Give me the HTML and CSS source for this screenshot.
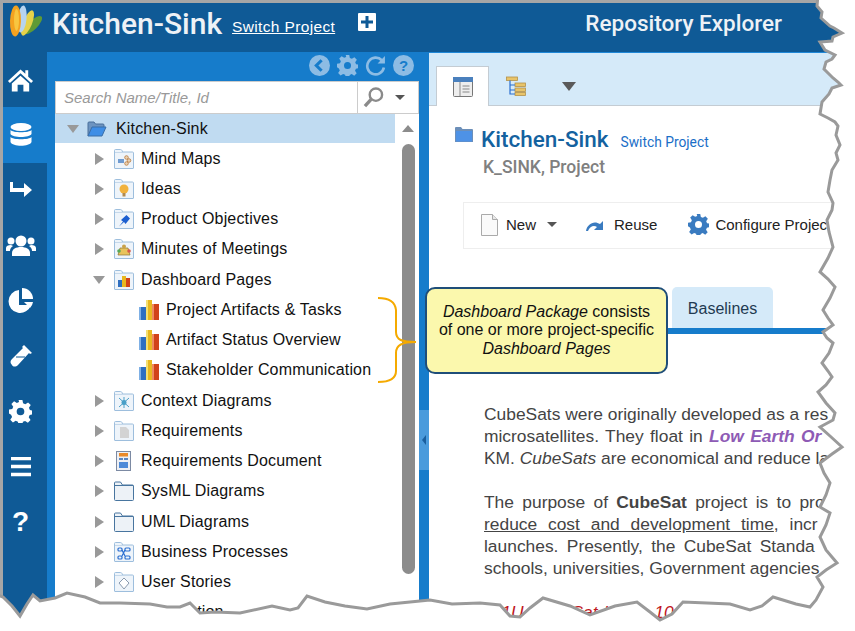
FILE: index.html
```html
<!DOCTYPE html>
<html lang="en">
<head>
<meta charset="utf-8">
<title>Repository Explorer</title>
<link rel="stylesheet" href="styles.css">
</head>
<body>
<svg class="defs" width="0" height="0" aria-hidden="true">
  <symbol id="folder" viewBox="0 0 20 20">
    <path d="M.5 19V1.500q0-1 1-1h5q1 0 1.500 1l.5 1.500h10q1 0 1 1V19q0 .5-.5.5h-18q-.5 0-.5-.5z" fill="#eef4fa" stroke="#9dbedd"/>
    <path d="M1 3.500h18" stroke="#c5d8ea"/>
  </symbol>
  <symbol id="barchart" viewBox="0 0 20 20">
    <rect x="0" y="7" width="7" height="13" fill="#2f6fc0"/><rect x="0" y="7" width="2" height="13" fill="#7fb0e5"/>
    <rect x="7" y="0" width="6" height="20" fill="#e8b820"/><rect x="7" y="0" width="2" height="20" fill="#f6e070"/>
    <rect x="13" y="4" width="7" height="16" fill="#d1431a"/><rect x="13" y="4" width="2" height="16" fill="#ee8a60"/>
  </symbol>
  <symbol id="gearshape" viewBox="0 0 24 24">
    <path fill-rule="evenodd" d="M10 0h4l.7 3.400 2.300 1 2.900-1.900 2.800 2.800-1.900 2.900 1 2.300 3.200.5v4l-3.400.7-1 2.300 1.900 2.900-2.800 2.800-2.900-1.900-2.300 1-.5 3.200h-4l-.7-3.400-2.300-1-2.900 1.900-2.800-2.800 1.900-2.900-1-2.300L0 14v-4l3.400-.7 1-2.300-1.900-2.900 2.800-2.800 2.900 1.900 2.300-1zM12 8a4 4 0 1 0 0 8 4 4 0 0 0 0-8z"/>
  </symbol>
</svg>
<div class="page">
  <header class="topbar">
    <svg class="logo" viewBox="0 0 36 32" width="36" height="32">
      <ellipse cx="26" cy="20" rx="4.500" ry="12" transform="rotate(45 26 20)" fill="#5f9a35"/>
      <ellipse cx="20.500" cy="18" rx="4.500" ry="13.500" transform="rotate(22 20.500 18)" fill="#e6d24a"/>
      <ellipse cx="15" cy="14" rx="4.500" ry="13.500" transform="rotate(6 15 14)" fill="#b7d4ef"/>
      <ellipse cx="8.500" cy="16" rx="5.500" ry="15.500" transform="rotate(2 8.500 16)" fill="#f4a21f"/>
      <ellipse cx="9.500" cy="15" rx="2.500" ry="11" fill="#f8c640"/>
    </svg>
    <span class="brand">Kitchen-Sink</span>
    <a class="switch-top">Switch Project</a>
    <span class="plus"><svg viewBox="0 0 18 18" width="18" height="18"><rect width="18" height="18" rx="1" fill="#fff"/><path d="M9 3v12M3 9h12" stroke="#0f5a96" stroke-width="3"/></svg></span>
    <span class="page-title">Repository Explorer</span>
  </header>
  <div class="main">
    <nav class="rail">
      <div class="rail-item"><svg viewBox="0 0 28 24" width="27" height="24"><path d="M14 1 1 13l2 2L14 5l11 10 2-2-5-4.500V2h-3v3.500z" fill="#fff"/><path d="M5 15.500 14 7.500l9 8V24h-6v-7h-6v7H5z" fill="#fff"/></svg></div>
      <div class="rail-item active"><svg viewBox="0 0 22 24" width="22" height="24"><ellipse cx="11" cy="4" rx="10.500" ry="4" fill="#fff"/><path d="M.5 7c2 3 19 3 21 0v4c-2 4-19 4-21 0zM.5 14c2 3 19 3 21 0v5c-2 5-19 5-21 0z" fill="#fff"/></svg></div>
      <div class="rail-item"><svg viewBox="0 0 24 18" width="24" height="18"><path d="M1 1h3v6h11V2l8 7-8 7v-5H1z" fill="#fff"/></svg></div>
      <div class="rail-item"><svg viewBox="0 0 30 22" width="30" height="22"><circle cx="15" cy="6" r="5.500" fill="#fff"/><path d="M6 21v-3c0-4 4-6 9-6s9 2 9 6v3z" fill="#fff"/><circle cx="5" cy="6" r="3.500" fill="#fff"/><circle cx="25" cy="6" r="3.500" fill="#fff"/><path d="M0 16v-3c0-2 2-3 5-3l2 1c-2 1-3 3-3 5zM30 16v-3c0-2-2-3-5-3l-2 1c2 1 3 3 3 5z" fill="#fff"/></svg></div>
      <div class="rail-item"><svg viewBox="0 0 26 26" width="26" height="26"><path d="M11 2a11.500 11.500 0 1 0 12 15H11z" fill="#fff"/><path d="M14 0a11 11 0 0 1 11 11H14z" fill="#fff"/><path d="M16 14h9a11 11 0 0 1-3 6z" fill="#fff"/></svg></div>
      <div class="rail-item"><svg viewBox="0 0 24 24" width="24" height="24"><path d="M15 1l8 8-2 1-1-1L9 21c-2 2-5 2-6 0-2-2-2-4 0-6L14 4l-1-1z" fill="#fff"/><path d="M7 13h9" stroke="#0f5a96"/></svg></div>
      <div class="rail-item"><svg viewBox="0 0 24 24" width="23" height="23" class="gear-white"><use href="#gearshape"/></svg></div>
      <div class="rail-item"><svg viewBox="0 0 22 20" width="22" height="20"><path d="M1 1.500h20M1 9.500h20M1 17.500h20" stroke="#fff" stroke-width="3.500"/></svg></div>
      <div class="rail-item"><span class="q">?</span></div>
    </nav>
    <aside class="panel">
      <div class="panel-tools">
        <svg viewBox="0 0 20 20" width="21" height="21"><circle cx="10" cy="10" r="10" fill="#8dbce4"/><path d="M12 5l-5 5 5 5" fill="none" stroke="#167ccb" stroke-width="3"/></svg>
        <svg viewBox="0 0 24 24" width="21" height="21" class="gear-muted"><use href="#gearshape"/></svg>
        <svg viewBox="0 0 20 20" width="21" height="21"><path d="M16 5a8 8 0 1 0 2 7" fill="none" stroke="#8dbce4" stroke-width="2.500"/><path d="M19 1v7h-7z" fill="#8dbce4"/></svg>
        <span class="help-dot">?</span>
      </div>
      <div class="panel-box">
        <div class="search">
          <span class="search-text">Search Name/Title, Id</span>
          <span class="search-btn">
            <svg viewBox="0 0 22 22" width="21" height="21"><circle cx="13.500" cy="8" r="6.500" fill="none" stroke="#8a8a8a" stroke-width="2.500"/><path d="M8.500 13 2 20" stroke="#8a8a8a" stroke-width="3.500"/></svg>
            <i class="caret"></i>
          </span>
        </div>
        <div class="tree-wrap">
          <ul class="tree">
            <li class="row root"><i class="tw down"></i><svg class="ic" viewBox="0 0 20 16" width="20" height="16"><path d="M1 15V2q0-1 1-1h5l1.500 2H16q1 0 1 1v3" fill="#6d94c0" stroke="#4a6f9a"/><path d="M1 15 5 6h14l-4 9z" fill="#3f8ee6" stroke="#3a6ea8"/></svg><span>Kitchen-Sink</span></li>
            <li class="row"><i class="tw"></i><svg class="ic"><use href="#folder"/><rect x="4" y="10" width="6" height="4" fill="#6f9bd1"/><g fill="#e9d2b4" stroke="#b9793a" stroke-width=".8"><circle cx="12.500" cy="8.500" r="1.800"/><circle cx="15" cy="11.500" r="1.800"/><circle cx="12.500" cy="14.500" r="1.800"/></g></svg><span>Mind Maps</span></li>
            <li class="row"><i class="tw"></i><svg class="ic"><use href="#folder"/><circle cx="10" cy="10" r="4.500" fill="#f1b23e"/><rect x="8.500" y="14" width="3" height="3.500" fill="#b08a50"/></svg><span>Ideas</span></li>
            <li class="row"><i class="tw"></i><svg class="ic"><use href="#folder"/><path d="M5 17.500l4-5-2-1.500 5.500-5 3.500 3.500-4.500 5.500-1.500-2z" fill="#1d5fd0"/></svg><span>Product Objectives</span></li>
            <li class="row"><i class="tw"></i><svg class="ic"><use href="#folder"/><path d="M4 16l2-7h8l2 7z" fill="#e8c35c" stroke="#8c7434" stroke-width=".7"/><circle cx="10" cy="7.500" r="2" fill="#c9a24a"/><circle cx="5" cy="12" r="1.800" fill="#58a858"/><circle cx="15" cy="12" r="1.800" fill="#d85a4a"/></svg><span>Minutes of Meetings</span></li>
            <li class="row"><i class="tw down"></i><svg class="ic"><use href="#folder"/><rect x="4" y="10" width="4" height="7" fill="#2f6fc0"/><rect x="8" y="6" width="4" height="11" fill="#e8b820"/><rect x="12" y="8" width="4" height="9" fill="#d1431a"/></svg><span>Dashboard Pages</span></li>
            <li class="row sub"><svg class="ic"><use href="#barchart"/></svg><span>Project Artifacts &amp; Tasks</span></li>
            <li class="row sub"><svg class="ic"><use href="#barchart"/></svg><span>Artifact Status Overview</span></li>
            <li class="row sub"><svg class="ic"><use href="#barchart"/></svg><span>Stakeholder Communication</span></li>
            <li class="row"><i class="tw"></i><svg class="ic"><use href="#folder"/><path d="M5 7l10 9M15 7 5 16M10 6v11" stroke="#4aa0c8"/><circle cx="10" cy="11.500" r="2.500" fill="#4aa0c8"/></svg><span>Context Diagrams</span></li>
            <li class="row"><i class="tw"></i><svg class="ic"><use href="#folder"/><path d="M6 6h6l3 3v8H6z" fill="#d3d3d3"/></svg><span>Requirements</span></li>
            <li class="row"><i class="tw"></i><svg class="ic" viewBox="0 0 20 20"><rect x="2.500" y=".5" width="14" height="19" fill="#eef0f4" stroke="#7c8aa3"/><rect x="5" y="2" width="9" height="3.500" fill="#ea8a2a"/><rect x="5" y="7" width="4" height="2" fill="#5a86c2"/><rect x="10" y="7" width="4" height="2" fill="#5a86c2"/><rect x="5" y="11" width="9" height="6" fill="#4d8ad8"/></svg><span>Requirements Document</span></li>
            <li class="row"><i class="tw"></i><svg class="ic" viewBox="0 0 20 20"><path d="M.5 18.500V2q0-1 1-1h5l2 3h10q1 0 1 1v13.500q0 1-1 1h-17q-1 0-1-1z" fill="#edf2f7" stroke="#48759f"/><path d="M1 4.500h18" stroke="#48759f"/></svg><span>SysML Diagrams</span></li>
            <li class="row"><i class="tw"></i><svg class="ic" viewBox="0 0 20 20"><path d="M.5 18.500V2q0-1 1-1h5l2 3h10q1 0 1 1v13.500q0 1-1 1h-17q-1 0-1-1z" fill="#edf2f7" stroke="#48759f"/><path d="M1 4.500h18" stroke="#48759f"/></svg><span>UML Diagrams</span></li>
            <li class="row"><i class="tw"></i><svg class="ic"><use href="#folder"/><g fill="none" stroke="#2a6ed0" stroke-width="1.200"><rect x="4" y="6" width="4" height="3" rx="1"/><rect x="11" y="6" width="5" height="3" rx="1"/><rect x="4" y="14" width="4" height="3" rx="1"/><rect x="11" y="14" width="5" height="3" rx="1"/><path d="M8 8l3 6M11 8l-3 6"/></g></svg><span>Business Processes</span></li>
            <li class="row"><i class="tw"></i><svg class="ic"><use href="#folder"/><path d="M10 6l5 5-5 6-5-6z" fill="#fff" stroke="#8a9bb0"/></svg><span>User Stories</span></li>
            <li class="row"><i class="tw"></i><svg class="ic"><use href="#folder"/></svg><span>Automation</span></li>
          </ul>
          <div class="scrollbar"><i class="scroll-up"></i><div class="thumb"></div></div>
        </div>
      </div>
    </aside>
    <div class="splitter"><div class="split-handle"><i></i></div></div>
    <section class="content">
      <div class="view-tabs">
        <span class="vtab on"><svg viewBox="0 0 20 20" width="20" height="20"><rect x=".5" y=".5" width="19" height="19" rx="1" fill="#eee" stroke="#777"/><rect x="0" y="0" width="20" height="5" fill="#4a80bd"/><path d="M7 5v14M9.500 9h7M9.500 12h7M9.500 15h7" stroke="#888"/></svg></span>
        <span class="vtab"><svg viewBox="0 0 20 20" width="20" height="20"><g fill="#e8c46a" stroke="#b3924a" stroke-width=".8"><rect x=".5" y="1" width="11" height="3.500"/><rect x="9" y="7" width="10.500" height="3.500"/><rect x="9" y="12" width="10.500" height="3.500"/><rect x="9" y="16.500" width="10.500" height="3"/></g><path d="M4 4.500V18h5M4 9h5M4 14h5" fill="none" stroke="#2a6ed0" stroke-width="1.200"/></svg></span>
        <span class="vtab"><i class="tri"></i></span>
      </div>
      <div class="title-row">
        <svg viewBox="0 0 18 16" width="18" height="16"><path d="M0 15V1q0-1 1-1h5l1.500 2H17q1 0 1 1v12z" fill="#6c8fb9"/><rect x="1" y="4" width="16" height="10.500" fill="#4e92e6"/></svg>
        <h1>Kitchen-Sink</h1>
        <a>Switch Project</a>
      </div>
      <div class="sub-title">K_SINK, Project</div>
      <div class="actions">
        <span class="act"><svg viewBox="0 0 17 22" width="17" height="22"><path d="M.5.5h11l5 5v16H.5z" fill="#fafafa" stroke="#aaa"/><path d="M11.500.5v5h5" fill="#e8e8e8" stroke="#aaa"/></svg>New<i class="caret"></i></span>
        <span class="act"><svg viewBox="0 0 21 14" width="21" height="14"><path d="M1 13C2 6 9 2 15 6l3-3v9h-9l3-3C9 7 5 8 3 13z" fill="#3a7bc0"/></svg>Reuse</span>
        <span class="act"><svg viewBox="0 0 24 24" width="21" height="21" class="gear-blue"><use href="#gearshape"/></svg>Configure Project</span>
      </div>
      <div class="tabstrip"><span class="tab">Baselines</span></div>
      <div class="doc">
        <p><span class="ln">CubeSats were originally developed as a res</span><span class="ln ws-b">microsatellites. They float in <b class="leo">Low Earth Or</b></span><span class="ln">KM. <em>CubeSats</em> are economical and reduce la</span></p>
        <p><span class="ln ws-c">The purpose of <b>CubeSat</b> project is to pro</span><span class="ln ws-d"><u>reduce cost and development time</u>, incr</span><span class="ln ws-c">launches. Presently, the CubeSat Standa</span><span class="ln">schools, universities, Government agencies</span></p>
        <p class="red"><span class="ln ws-b"><em>A 1U CubeSat has a 10 cm</em></span></p>
      </div>
    </section>
  </div>

  <svg class="brace" viewBox="0 0 60 90" width="60" height="90"><path d="M1 2c8 0 17 2 18 12v22c0 8 6 10 20 10-14 0-20 3-20 11v18c0 9-10 11-18 11" fill="none" stroke="#f5aa00" stroke-width="2"/></svg>
  <div class="callout"><em>Dashboard Package</em> consists of one or more project-specific <em>Dashboard Pages</em></div>

  <svg class="tear" viewBox="0 0 855 631" width="855" height="631">
    <path d="M818 -5 817 6 822 12 821 18 830 26 834 28 842 33 833 37 832 41 820 42 825 50 835 55 832 59 826 62 824 69 833 78 838 82 841 85 832 88 829 94 822 102 820 114 828 118 835 122 838 126 836 135 840 145 836 153 838 160 832 170 830 180 828 192 833 203 832 210 827 220 829 232 833 247 828 258 820 272 828 279 835 287 830 298 823 310 828 318 833 325 823 332 827 338 833 343 829 353 822 363 828 371 832 377 826 385 818 392 826 403 835 413 833 420 820 427 830 436 842 447 832 454 820 463 824 473 830 483 826 495 820 507 830 513 826 525 820 537 826 550 837 563 826 570 817 577 823 587 816 600 810 607 796 604 773 597 762 606 750 610 730 604 707 603 683 602 672 614 660 620 650 612 637 602 615 606 590 615 570 606 543 598 530 608 520 617 510 616 500 605 480 603 452 604 430 600 410 602 390 604 367 609 345 606 325 602 307 596 298 608 290 610 272 606 240 613 215 612 200 613 190 603 180 607 167 607 150 604 120 603 100 603 85 597 67 593 55 598 40 601 33 595 27 604 20 616 12 606 3 597 -5 594 -5 640 860 640 860 -5z" fill="#fff" stroke="#9a9a9a" stroke-width="3" stroke-linejoin="miter"/>
  </svg>
</div>
</body>
</html>
```
FILE: styles.css
```css
* { box-sizing: border-box; }
html, body { margin: 0; padding: 0; }
body { width: 855px; height: 631px; overflow: hidden; background: #fff; font-family: "Liberation Sans", Arial, sans-serif; }
.defs { position: absolute; }
.page { position: relative; width: 855px; height: 631px; overflow: hidden; background: #a6a6a6; padding: 3px 0 0 3px; display: flex; flex-direction: column; }

.topbar { height: 49px; flex: none; background: #0f5a96; display: flex; align-items: center; color: #eef2f6; font-family: Roboto, sans-serif; }
.logo { margin: -14px 0 0 4px; flex: none; }
.brand { font-size: 30px; font-weight: 500; margin: -9px 0 0 9px; }
.switch-top { font-family: "Liberation Sans", sans-serif; font-size: 15.500px; letter-spacing: .35px; color: #fff; text-decoration: underline; margin: -2px 0 0 10px; }
.plus { display: flex; margin: -11px 0 0 23px; }
.page-title { margin: -10px 0 0 auto; padding-right: 73px; font-size: 22.500px; font-weight: 500; }

.main { flex: 1; display: flex; min-height: 0; }
.rail { width: 44px; flex: none; background: #0f5a96; display: flex; flex-direction: column; }
.rail-item { height: 55.300px; flex: none; display: flex; align-items: center; justify-content: center; padding-right: 9px; color: #fff; }
.rail-item.active { background: #167ccb; }
.q { font: 700 28px "Liberation Sans", sans-serif; color: #fff; }
.gear-white { fill: #fff; }

.panel { width: 372px; flex: none; background: #167ccb; display: flex; flex-direction: column; padding-left: 8px; }
.panel-tools { height: 29px; flex: none; display: flex; align-items: center; justify-content: flex-end; gap: 7px; padding: 0 5px 2px 0; }
.gear-muted { fill: #8dbce4; }
.help-dot { width: 21px; height: 21px; border-radius: 50%; background: #8dbce4; color: #167ccb; font: 700 15px/21px "Liberation Sans", sans-serif; text-align: center; }
.panel-box { flex: 1; background: #fff; display: flex; flex-direction: column; min-height: 0; }
.search { height: 33px; flex: none; border: 1px solid #ccc; display: flex; background: #fff; }
.search-text { flex: 1; font-style: italic; color: #999; font-size: 15px; line-height: 31px; padding-left: 8px; }
.search-btn { width: 61px; flex: none; border-left: 1px solid #ccc; display: flex; align-items: center; gap: 11px; padding-left: 5px; }
.caret { display: inline-block; width: 0; height: 0; border: 5px solid transparent; border-top: 5px solid #555; border-bottom: 0; }

.tree-wrap { flex: 1; display: flex; min-height: 0; overflow: hidden; }
.tree { list-style: none; margin: 0; padding: 0; flex: 1; }
.row { height: 30.250px; display: flex; align-items: center; font-size: 16px; letter-spacing: .17px; color: #111; padding-left: 37.500px; white-space: nowrap; }
.row span { margin-left: 7.500px; }
.row.root { height: 29px; background: #c0dbf1; padding-left: 12px; margin-bottom: .5px; }
.row.root span { margin-left: 9px; }
.row.sub { padding-left: 84px; }
.row.sub span { margin-left: 7px; }
.tw { width: 0; height: 0; flex: none; border-style: solid; border-width: 6px 0 6px 9px; border-color: transparent transparent transparent #999; margin-right: 10px; margin-left: 2px; }
.tw.down { border-width: 8px 6.500px 0; border-color: #999 transparent transparent; margin: 0 9px 0 0; }
.ic { width: 20px; height: 20px; flex: none; }
.root .ic { width: 20px; height: 16px; }
.row.root .tw { margin-right: 8px; }
.scrollbar { width: 24px; flex: none; display: flex; flex-direction: column; align-items: flex-start; padding: 11px 0 0 7px; }
.scroll-up { width: 0; height: 0; flex: none; border-style: solid; border-width: 0 6.500px 7px; border-color: transparent transparent #8c8c8c; margin-bottom: 12px; }
.thumb { width: 13px; height: 430px; flex: none; background: #8c8c8c; border-radius: 7px; }

.splitter { width: 10px; flex: none; background: #167ccb; padding-top: 358px; }
.split-handle { height: 60px; background: #4a9bdc; display: flex; align-items: center; justify-content: center; }
.split-handle i { width: 0; height: 0; border-style: solid; border-width: 5px 4px 5px 0; border-color: transparent #1a5f9e transparent transparent; }

.content { flex: 1; background: #fff; min-width: 0; overflow: hidden; display: flex; flex-direction: column; }
.view-tabs { height: 54px; flex: none; background: #d5eaf9; border-bottom: 1px solid #c4ccd3; border-top: 1px solid #1f88d8; display: flex; align-items: flex-end; padding-left: 7px; }
.vtab { width: 53px; height: 40px; margin-bottom: -1px; display: flex; align-items: center; justify-content: center; }
.vtab.on { background: #fff; border: 1px solid #c4ccd3; border-bottom: 0; }
.tri { width: 0; height: 0; border-style: solid; border-width: 9px 7.500px 0; border-color: #5a5a5a transparent transparent; }
.title-row { display: flex; align-items: center; height: 30px; margin: 18px 0 0 26px; flex: none; }
.title-row svg { margin-top: -8px; }
.title-row h1 { margin: 0 0 0 8px; font: 500 22.500px Roboto, sans-serif; color: #14629f; }
.title-row a { margin: 6px 0 0 12px; font: 400 13.800px Roboto, sans-serif; color: #1a6ec7; }
.sub-title { margin: 2px 0 0 54px; height: 22px; flex: none; font: 500 17.500px/22px Roboto, sans-serif; color: #80807f; }
.actions { margin: 24px 0 0 34px; width: 500px; height: 47px; flex: none; border: 1px solid #eee; display: flex; align-items: center; padding-bottom: 2px; font-size: 15px; color: #222; }
.act { display: inline-flex; align-items: center; gap: 8px; white-space: nowrap; }
.act:nth-child(1) { margin-left: 17px; }
.act:nth-child(1) .caret { margin-left: 3px; }
.act:nth-child(2) { margin-left: 28px; }
.act:nth-child(3) { margin-left: 31px; gap: 6px; }
.gear-blue { fill: #3a7bc0; }
.tabstrip { margin-top: 38px; height: 47px; flex: none; border-bottom: 6px solid #167ccb; padding-left: 243px; display: flex; }
.tab { width: 101px; height: 41px; background: #d5eaf9; border-radius: 5px 5px 0 0; color: #1f3a52; font-size: 16px; line-height: 43px; text-align: center; }
.doc { margin: 69px 0 0 55px; font-size: 17.400px; line-height: 22px; color: #444; flex: none; }
.doc p { margin: 0 0 22px; }
.ln { display: block; white-space: nowrap; height: 22px; }
.ws-b { word-spacing: 1.500px; }
.ws-c { word-spacing: 3.500px; }
.ws-d { word-spacing: 6px; }
.leo { color: #8e5bb5; font-style: italic; }
.red { color: #c0161c; }

.brace { position: absolute; left: 377px; top: 296px; }
.callout { position: absolute; left: 425px; top: 287px; width: 243px; height: 87px; background: #fbf8ad; border: 2px solid #1f4e79; border-radius: 10px; padding: 13.500px 9px 0; font-size: 16px; line-height: 18.500px; color: #111; text-align: center; }
.tear { position: absolute; left: 0; top: 0; }
```
